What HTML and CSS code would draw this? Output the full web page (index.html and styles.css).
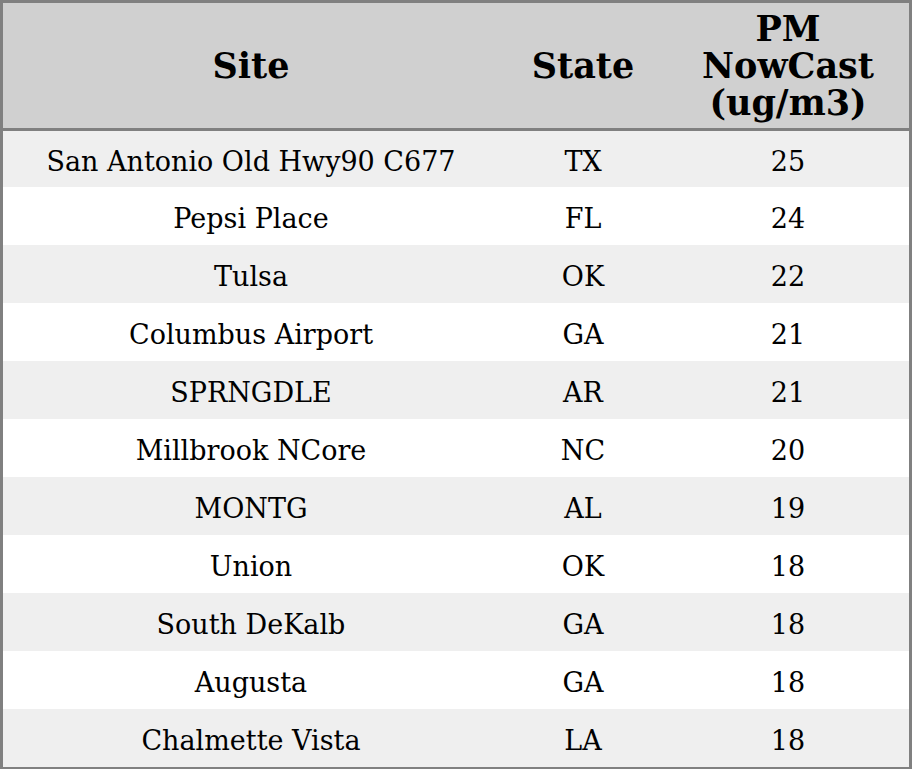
FILE: index.html
```html
<!DOCTYPE html>
<html>
<head>
<meta charset="utf-8">
<link rel="stylesheet" href="styles.css">
</head>
<body>
<table class="aq-table">
  <colgroup>
    <col class="col-site">
    <col class="col-state">
    <col class="col-pm">
  </colgroup>
  <thead>
    <tr class="head-row">
      <th>Site</th>
      <th>State</th>
      <th>PM<br>NowCast<br>(ug/m3)</th>
    </tr>
  </thead>
  <tbody>
    <tr class="row-first"><td>San Antonio Old Hwy90 C677</td><td>TX</td><td>25</td></tr>
    <tr><td>Pepsi Place</td><td>FL</td><td>24</td></tr>
    <tr><td>Tulsa</td><td>OK</td><td>22</td></tr>
    <tr><td>Columbus Airport</td><td>GA</td><td>21</td></tr>
    <tr><td>SPRNGDLE</td><td>AR</td><td>21</td></tr>
    <tr><td>Millbrook NCore</td><td>NC</td><td>20</td></tr>
    <tr><td>MONTG</td><td>AL</td><td>19</td></tr>
    <tr><td>Union</td><td>OK</td><td>18</td></tr>
    <tr><td>South DeKalb</td><td>GA</td><td>18</td></tr>
    <tr><td>Augusta</td><td>GA</td><td>18</td></tr>
    <tr><td>Chalmette Vista</td><td>LA</td><td>18</td></tr>
  </tbody>
</table>
</body>
</html>
```
FILE: styles.css
```css
html, body {
  margin: 0;
  padding: 0;
  background: #ffffff;
}

.aq-table {
  width: 912px;
  border-collapse: separate;
  border-spacing: 0;
  border: 3px solid #808080;
  table-layout: fixed;
  font-family: "DejaVu Serif", serif;
  color: #000;
}

.col-site { width: 496px; }
.col-state { width: 168px; }
.col-pm { width: 242px; }

.head-row th {
  height: 125px;
  padding: 0;
  background: #d0d0d0;
  border-bottom: 3px solid #808080;
  font-size: 35px;
  font-weight: bold;
  line-height: 37px;
  text-align: center;
  vertical-align: middle;
}

.aq-table td {
  box-sizing: border-box;
  height: 58px;
  padding: 4px 0 0 0;
  font-size: 27px;
  line-height: 31px;
  text-align: center;
  vertical-align: middle;
}

.aq-table tbody tr.row-first td {
  height: 56px;
}

.aq-table tbody tr:nth-child(odd) td {
  background: #efefef;
}

.aq-table tbody tr:nth-child(even) td {
  background: #ffffff;
}
```
